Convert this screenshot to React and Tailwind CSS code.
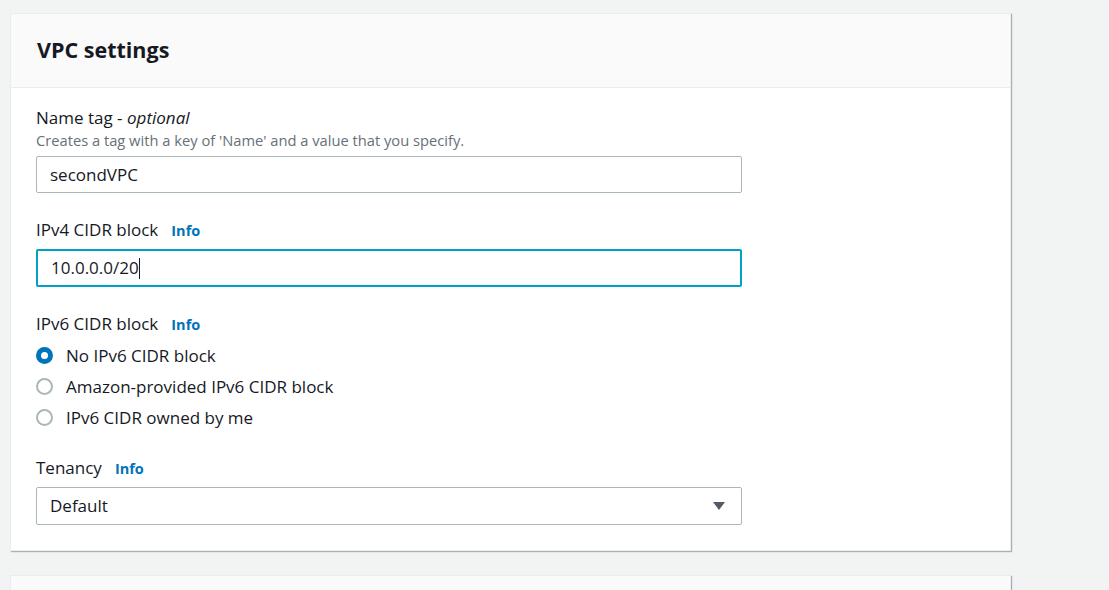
const font = { fontFamily: '"Open Sans", "Noto Sans", sans-serif' };

const Info = () => (
  <span className="ml-[13px] text-[14.5px] font-bold text-[#0073bb]">Info</span>
);

const Radio = ({ checked, label }) => (
  <label className="flex items-center h-[31px]">
    {checked ? (
      <span className="w-[17px] h-[17px] rounded-full bg-[#0073bb] flex items-center justify-center">
        <span className="w-[7px] h-[7px] rounded-full bg-white" />
      </span>
    ) : (
      <span className="w-[17px] h-[17px] rounded-full border-2 border-[#aab7b8] bg-white" />
    )}
    <span className="ml-[13px] text-[17px] text-[#16191f]">{label}</span>
  </label>
);

const App = () => {
  return (
    <div className="min-h-[590px] bg-[#f2f3f3] pt-[13px] pl-[10px] overflow-hidden" style={font}>
      <div className="w-[1001px] bg-white border border-[#eaeded] shadow-[1px_1px_1px_0_rgba(0,28,36,0.3)]">
        <div className="h-[74px] bg-[#fafafa] border-b border-[#eaeded] flex items-center px-[26px]">
          <h2 className="text-[21.5px] font-bold text-[#16191f]">VPC settings</h2>
        </div>
        <div className="px-[25px] pt-[18px] pb-[25px] w-[756px]">
          <div className="text-[17px] text-[#16191f] leading-[23px]">
            Name tag - <i>optional</i>
          </div>
          <div className="text-[14.7px] text-[#687078] leading-[22px]">
            Creates a tag with a key of 'Name' and a value that you specify.
          </div>
          <div className="mt-[5px] h-[37px] border border-[#aab7b8] rounded-[2px] flex items-center px-[13px] text-[17px] text-[#16191f]">
            secondVPC
          </div>

          <div className="mt-[25px] flex items-baseline text-[17px] text-[#16191f] leading-[23px]">
            IPv4 CIDR block <Info />
          </div>
          <div className="mt-[7px] h-[38px] border-2 border-[#00a1c9] rounded-[2px] flex items-center px-[13px] text-[17px] text-[#16191f]">
            10.0.0.0/20
            <span className="w-px h-[21px] bg-[#16191f]" />
          </div>

          <div className="mt-[25px] flex items-baseline text-[17px] text-[#16191f] leading-[23px]">
            IPv6 CIDR block <Info />
          </div>
          <div className="mt-[4px] flex flex-col">
            <Radio checked label="No IPv6 CIDR block" />
            <Radio label="Amazon-provided IPv6 CIDR block" />
            <Radio label="IPv6 CIDR owned by me" />
          </div>

          <div className="mt-[23px] flex items-baseline text-[17px] text-[#16191f] leading-[23px]">
            Tenancy <Info />
          </div>
          <div className="mt-[7px] h-[38px] border border-[#aab7b8] rounded-[2px] flex items-center justify-between pl-[13px] pr-[16px] text-[17px] text-[#16191f]">
            <span>Default</span>
            <svg width="12" height="10" viewBox="0 0 12 10">
              <path d="M0 1 L12 1 L6 9 Z" fill="#545b64" />
            </svg>
          </div>
        </div>
      </div>
      <div className="mt-[24px] w-[1001px] h-[40px] bg-[#fafafa] border border-[#eaeded] shadow-[1px_1px_1px_0_rgba(0,28,36,0.3)]" />
    </div>
  );
};

export default App;
